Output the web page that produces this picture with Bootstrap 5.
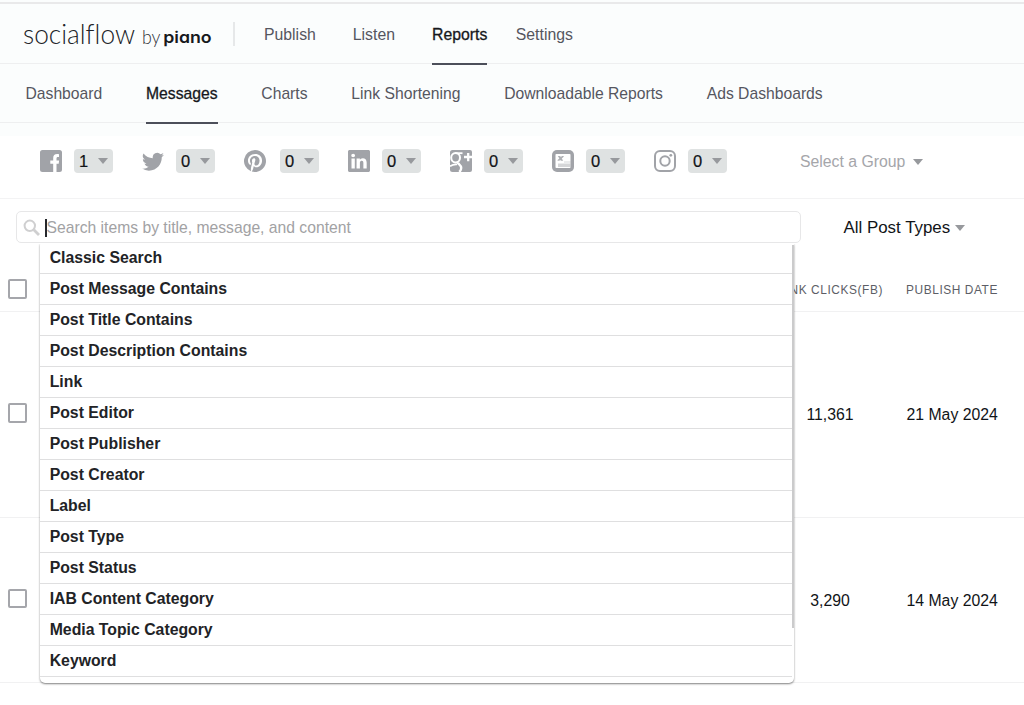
<!DOCTYPE html>
<html lang="en">
<head>
<meta charset="utf-8">
<meta name="viewport" content="width=device-width, initial-scale=1">
<title>SocialFlow Reports</title>
<link rel="stylesheet" href="https://cdn.jsdelivr.net/npm/bootstrap@5.3.0/dist/css/bootstrap.min.css">
<style>
body{font-family:"Liberation Sans",Arial,sans-serif;font-size:15.8px;line-height:20px;color:#111417;background:#fff;height:705px;overflow:hidden}
.head-area{background:#fbfdfd;height:136px;padding-top:2px}
.topbar{height:62px;border-top:2px solid #e9e9ea;border-bottom:1px solid #eeeff0}
.subbar{height:59px;border-bottom:1px solid #eeeff0}
.brand-logo{margin-left:20px;width:200px;height:40px}
.brand-logo text{font-variant-ligatures:no-common-ligatures}
.brand-logo .piano-word{font-feature-settings:"cv11" 1,"ss01" 1}
.split{width:1.5px;height:24px;margin:0 29.5px 0 13px;background:#e6e8e9}
.tabs-line .nav-link{padding:2px 0 0;color:#55565f;height:100%;display:flex;align-items:center;position:relative;white-space:nowrap}
.tabs-line .nav-link.active{color:#16181c;-webkit-text-stroke:.3px #16181c}
.tabs-line .nav-link.active::after{content:"";position:absolute;left:0;right:0;bottom:-2px;height:2px;background:#4c4f5a}
.tabs-top{gap:37px}
.tabs-top li:last-child{margin-left:-8.5px}
.tabs-sub{padding-left:25.5px;gap:43.8px;font-size:15.7px}
.tabs-sub .nav-link{padding-top:2px}
.accounts{height:63px;padding:13px 0 0 40px;border-bottom:1px solid #f3f3f4}
.acct{width:102px;height:24px}
.acct svg.ico{width:22px;height:22px;fill:#a1a3a8;flex:none}
.acct.pin{width:104px}
.acct.pin .pill{margin-left:14px}
.pill{width:39px;height:24px;margin-left:12px;border-radius:4px;background:#dfe2e2;padding:0 5px;line-height:24px;font-size:16.5px;-webkit-text-stroke:.2px #111417}
.caret{width:0;height:0;border:5.5px solid transparent;border-top:6px solid #97999d;border-bottom:0}
.group-pick{color:#a5a6aa;margin-left:44px;height:26px}
.search-box{width:785px;height:32px;margin:12px 0 0 15.5px;border:1.5px solid #e7e7e8;border-radius:5px;color:#a2a2a4;padding:1px 0 0 6px;font-size:15.7px}
.cursor{width:1.5px;height:18px;background:#26282c;margin-left:4.5px}
.filter-pick{margin:14px 0 0 43px;font-size:16.9px}
.filter-pick .caret{margin-left:4.5px}
.row-grid{display:grid;grid-template-columns:39px 1fr 90px 163px;align-items:center}
.box{width:19.5px;height:19.5px;border:2px solid #a5a6ab;border-radius:2px;margin-left:7.5px;background:#fff}
.th-row{font-size:11.9px;letter-spacing:.58px;color:#5c5e66;height:69px;padding-top:24px;border-bottom:1px solid #f1f1f2}
.th-row .th-clicks{justify-self:end;margin:1px -22px 0 0}
.th-row .th-date{margin:1px 0 0 45px}
.td-row{height:206px;border-bottom:1px solid #f1f1f2}
.td-row .box{margin-top:-3px}
.td-row.short{height:165px}
.td-row .num{text-align:center;margin:1px -14px 0 14px}
.td-row .dt{margin:1px 0 0 45.5px}
.options{left:39.5px;top:243px;width:754.5px;height:439.5px;background:#fff;border-radius:2px 2px 5px 5px;box-shadow:0 1px 2px rgba(0,0,0,.5);overflow:hidden;clip-path:inset(1px -3px -4px -3px)}
.options .opt{height:31px;border-bottom:1px solid #dfdfe0;padding-left:10.2px;width:752.5px;font-weight:700;line-height:30px;color:#222326}
.thumb{right:0;top:2px;width:2px;height:383px;background:#cbcbcc}
</style>
</head>
<body>
<header class="head-area">
  <div class="topbar d-flex align-items-center">
    <svg class="brand-logo" viewBox="20 14 200 40" aria-label="socialflow by piano">
      <text x="23" y="43.5" font-family="Lato" font-weight="300" font-size="28" fill="#202327" textLength="112" lengthAdjust="spacingAndGlyphs">socialflow</text>
      <text x="142" y="43.5" font-family="Lato" font-weight="300" font-size="19.5" fill="#303338" textLength="18.5" lengthAdjust="spacingAndGlyphs">by</text>
      <text class="piano-word" x="163.2" y="43.3" font-family="Inter" font-weight="600" font-size="16.6" fill="#17191d" textLength="48.5" lengthAdjust="spacingAndGlyphs">piano</text>
    </svg>
    <div class="split"></div>
    <ul class="nav tabs-line tabs-top flex-nowrap h-100">
      <li class="nav-item"><a class="nav-link">Publish</a></li>
      <li class="nav-item"><a class="nav-link">Listen</a></li>
      <li class="nav-item"><a class="nav-link active">Reports</a></li>
      <li class="nav-item"><a class="nav-link">Settings</a></li>
    </ul>
  </div>
  <div class="subbar">
    <ul class="nav tabs-line tabs-sub flex-nowrap h-100">
      <li class="nav-item"><a class="nav-link">Dashboard</a></li>
      <li class="nav-item"><a class="nav-link active">Messages</a></li>
      <li class="nav-item"><a class="nav-link">Charts</a></li>
      <li class="nav-item"><a class="nav-link">Link Shortening</a></li>
      <li class="nav-item"><a class="nav-link">Downloadable Reports</a></li>
      <li class="nav-item"><a class="nav-link">Ads Dashboards</a></li>
    </ul>
  </div>
</header>
<section class="accounts d-flex">
  <div class="acct d-flex align-items-center">
    <svg class="ico" viewBox="0 0 22 22"><path d="M2.500 0h17A2.500 2.500 0 0 1 22 2.500v17a2.500 2.500 0 0 1-2.500 2.500H16.500v-8.200h2.200l.4-3.300h-2.600V8.600c0-1 .4-1.500 1.500-1.500H19V4.200c-3.800-.6-5.800.4-5.800 4v2.300H10.300v3.300h2.900V22h-10.700A2.500 2.500 0 0 1 0 19.500v-17A2.500 2.500 0 0 1 2.500 0z"/></svg>
    <div class="pill d-flex align-items-center justify-content-between"><span>1</span><span class="caret"></span></div>
  </div>
  <div class="acct d-flex align-items-center">
    <svg class="ico" viewBox="0 0 16 16"><path d="M5.026 15c6.038 0 9.341-5.003 9.341-9.334 0-.14 0-.282-.006-.422A6.685 6.685 0 0 0 16 3.542a6.658 6.658 0 0 1-1.889.518 3.301 3.301 0 0 0 1.447-1.817 6.533 6.533 0 0 1-2.087.793A3.286 3.286 0 0 0 7.875 6.030a9.325 9.325 0 0 1-6.767-3.429 3.289 3.289 0 0 0 1.018 4.382A3.323 3.323 0 0 1 .64 6.575v.045a3.288 3.288 0 0 0 2.632 3.218 3.203 3.203 0 0 1-.865.115 3.230 3.230 0 0 1-.614-.057 3.283 3.283 0 0 0 3.067 2.277A6.588 6.588 0 0 1 .78 13.580a6.320 6.320 0 0 1-.78-.045A9.344 9.344 0 0 0 5.026 15z"/></svg>
    <div class="pill d-flex align-items-center justify-content-between"><span>0</span><span class="caret"></span></div>
  </div>
  <div class="acct pin d-flex align-items-center">
    <svg class="ico" viewBox="0 0 16 16"><path d="M8 0a8 8 0 0 0-2.915 15.452c-.07-.633-.134-1.606.027-2.297.146-.625.938-3.977.938-3.977s-.239-.479-.239-1.187c0-1.113.645-1.943 1.448-1.943.682 0 1.012.512 1.012 1.127 0 .686-.437 1.712-.663 2.663-.188.796.4 1.446 1.185 1.446 1.422 0 2.515-1.500 2.515-3.664 0-1.915-1.377-3.254-3.342-3.254-2.276 0-3.612 1.707-3.612 3.471 0 .688.265 1.425.595 1.826a.24.24 0 0 1 .056.230c-.061.252-.196.796-.222.907-.035.146-.116.177-.268.107-1-.465-1.624-1.926-1.624-3.100 0-2.523 1.834-4.840 5.286-4.840 2.775 0 4.932 1.977 4.932 4.620 0 2.757-1.739 4.976-4.151 4.976-.811 0-1.573-.421-1.834-.919l-.498 1.902c-.181.695-.669 1.566-.995 2.097A8 8 0 1 0 8 0z"/></svg>
    <div class="pill d-flex align-items-center justify-content-between"><span>0</span><span class="caret"></span></div>
  </div>
  <div class="acct d-flex align-items-center">
    <svg class="ico" viewBox="0 0 16 16"><path d="M0 1.146C0 .513.526 0 1.175 0h13.650C15.474 0 16 .513 16 1.146v13.708c0 .633-.526 1.146-1.175 1.146H1.175C.526 16 0 15.487 0 14.854V1.146zm4.943 12.248V6.169H2.542v7.225h2.401zm-1.200-8.212c.837 0 1.358-.554 1.358-1.248-.015-.709-.520-1.248-1.342-1.248-.822 0-1.359.540-1.359 1.248 0 .694.521 1.248 1.327 1.248h.016zm4.908 8.212V9.359c0-.216.016-.432.080-.586.173-.431.568-.878 1.232-.878.869 0 1.216.662 1.216 1.634v3.865h2.401V9.250c0-2.220-1.184-3.252-2.764-3.252-1.274 0-1.845.700-2.165 1.193V6.169h-2.400c.030.678 0 7.225 0 7.225h2.400z"/></svg>
    <div class="pill d-flex align-items-center justify-content-between"><span>0</span><span class="caret"></span></div>
  </div>
  <div class="acct d-flex align-items-center">
    <svg class="ico" viewBox="0 0 22 22"><path d="M2.500 0H20a2 2 0 0 1 2 2v18a2 2 0 0 1-2 2H2.500A2.500 2.500 0 0 1 0 19.500v-17A2.500 2.500 0 0 1 2.500 0z"/><g fill="none" stroke="#fff"><ellipse cx="5.600" cy="7.800" rx="4.400" ry="4.700" stroke-width="2"/><path d="M5.500 3.200h7" stroke-width="1.800"/><path d="M8 11.800c-1.500 1.500 3.400 3 3.200 6.200-.1 1.800-1 3.200-2 4" stroke-width="2.400"/><path d="M7 14.500c-3-.2-5 .4-7 1.800" stroke-width="1.700"/><path d="M18.200 3v8.200M14 7h8" stroke-width="2.300"/></g></svg>
    <div class="pill d-flex align-items-center justify-content-between"><span>0</span><span class="caret"></span></div>
  </div>
  <div class="acct d-flex align-items-center">
    <svg class="ico" viewBox="0 0 22 22"><rect width="22" height="22" rx="5"/><rect x="3.500" y="4" width="15" height="14" rx=".8" fill="#fff"/><path d="M5.800 6h2.400l3 4.800H8.800zM10 6h1.700v.8L7.300 10.800H5.600V10z" opacity=".85"/><path d="M12 11.500h6.500v1H12zM6 13.500h12.500V17H6z" opacity=".45"/></svg>
    <div class="pill d-flex align-items-center justify-content-between"><span>0</span><span class="caret"></span></div>
  </div>
  <div class="acct d-flex align-items-center">
    <svg class="ico" viewBox="0 0 22 22"><g fill="none" stroke="#a1a3a8" stroke-width="2"><rect x="1" y="1" width="20" height="20" rx="5"/><circle cx="11" cy="11" r="4.700"/></g><circle cx="16.800" cy="5.300" r="1.400"/></svg>
    <div class="pill d-flex align-items-center justify-content-between"><span>0</span><span class="caret"></span></div>
  </div>
  <div class="group-pick d-flex align-items-center"><span>Select a Group</span><span class="caret ms-2"></span></div>
</section>
<main>
  <div class="d-flex">
    <div class="search-box d-flex align-items-center">
      <svg width="18" height="18" viewBox="0 0 18 18" fill="none" stroke="#cfcfd0"><circle cx="6.800" cy="6.800" r="5.200" stroke-width="2"/><path d="m10.800 10.800 5.200 5.200" stroke-width="2.800"/></svg>
      <span class="cursor"></span><span>Search items by title, message, and content</span>
    </div>
    <div class="d-flex align-items-center filter-pick"><span>All Post Types</span><span class="caret"></span></div>
  </div>
  <div class="row-grid th-row"><div><div class="box"></div></div><div></div><div class="th-clicks text-nowrap">LINK CLICKS(FB)</div><div class="th-date text-nowrap">PUBLISH DATE</div></div>
  <div class="row-grid td-row"><div><div class="box"></div></div><div></div><div class="num">11,361</div><div class="dt">21 May 2024</div></div>
  <div class="row-grid td-row short"><div><div class="box"></div></div><div></div><div class="num">3,290</div><div class="dt">14 May 2024</div></div>
</main>
<div class="options position-absolute">
  <div class="opt">Classic Search</div>
  <div class="opt">Post Message Contains</div>
  <div class="opt">Post Title Contains</div>
  <div class="opt">Post Description Contains</div>
  <div class="opt">Link</div>
  <div class="opt">Post Editor</div>
  <div class="opt">Post Publisher</div>
  <div class="opt">Post Creator</div>
  <div class="opt">Label</div>
  <div class="opt">Post Type</div>
  <div class="opt">Post Status</div>
  <div class="opt">IAB Content Category</div>
  <div class="opt">Media Topic Category</div>
  <div class="opt">Keyword</div>
  <span class="thumb position-absolute"></span>
</div>
<script src="https://cdn.jsdelivr.net/npm/bootstrap@5.3.0/dist/js/bootstrap.bundle.min.js"></script>
</body>
</html>
